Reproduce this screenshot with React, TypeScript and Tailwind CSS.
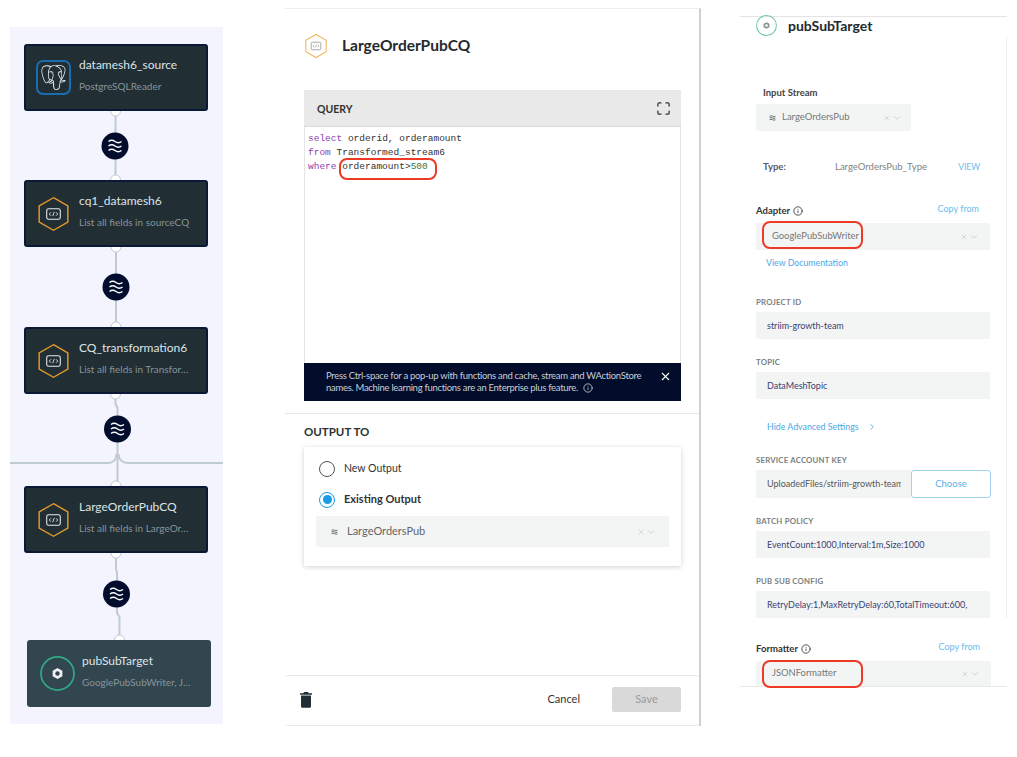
import React from 'react'
import { Maximize, X, ChevronDown, ChevronRight, Info } from 'lucide-react'
import { SiPostgresql } from 'react-icons/si'

const CodeHex = ({ size = 'w-[31px] h-[36px]', stroke = '#e3982b', ink = '#e6ebed' }: { size?: string; stroke?: string; ink?: string }) => (
  <svg viewBox="0 0 32 36" className={size} fill="none">
    <path d="M16 1.2 30.8 9.6v16.8L16 34.8 1.2 26.4V9.6Z" stroke={stroke} strokeWidth="1.5" />
    <rect x="9" y="12.5" width="14" height="11" rx="2" stroke={ink} strokeWidth="1.1" />
    <path d="M13.4 16.2 11.6 18l1.8 1.8M18.6 16.2l1.8 1.8-1.8 1.8M16.8 15.8l-1.6 4.4" stroke={ink} strokeWidth=".9" />
  </svg>
)

const NutRing = ({ size, ring, nut, hole }: { size: string; ring: string; nut: string; hole: string }) => (
  <svg viewBox="0 0 36 36" className={size} fill="none">
    <circle cx="18" cy="18" r="17" stroke={ring} strokeWidth="1.8" />
    <path d="M18 12.4 23 15.2v5.6L18 23.6 13 20.8v-5.6Z" fill={nut} />
    <circle cx="18" cy="18" r="2.3" fill={hole} />
  </svg>
)

const StreamGlyph = () => (
  <svg viewBox="0 0 12 10" className="w-[7px] h-[8px] shrink-0" fill="none" stroke="#555" strokeWidth="1.4">
    <path d="M1 2q2.5-1.6 5 0t5 0M1 5q2.5-1.6 5 0t5 0M1 8q2.5-1.6 5 0t5 0" />
  </svg>
)

const Node = ({ icon, title, sub, className, iconClass = 'w-[53px] pl-[2px]' }: { icon: React.ReactNode; title: string; sub: string; className: string; iconClass?: string }) => (
  <div className={`relative w-[184px] h-[67px] rounded-[3px] flex items-center ${className}`}>
    <div className={`flex justify-center shrink-0 ${iconClass}`}>{icon}</div>
    <div className="flex flex-col gap-[6px] min-w-0 pb-[6px]">
      <div className="text-[12px] leading-[16px] text-[#dde3e6] whitespace-nowrap">{title}</div>
      <div className="text-[10px] leading-[14px] text-[#87949a] whitespace-nowrap">{sub}</div>
    </div>
  </div>
)

// piece of pipeline between two nodes: wire, stream bubble, end caps
const Wire = ({ h, d, top, bottom, cx, cy, extra }: { h: number; d: string; top: number; bottom: number; cx: number; cy: number; extra?: string }) => (
  <svg width="213" height={h} className="overflow-visible" fill="none">
    <circle cx={top} cy="0" r="5" fill="#fff" stroke="#bfcbd1" />
    <circle cx={bottom} cy={h} r="5" fill="#fff" stroke="#bfcbd1" />
    <path d={d} stroke="#bfcbd1" strokeWidth="2" />
    {extra && <path d={extra} stroke="#bfcbd1" strokeWidth="2" />}
    <circle cx={cx} cy={cy} r="13.5" fill="#020d2e" />
    <path
      d={`M${cx - 6.5} ${cy - 4.5}q3.2-2.6 6.5 0t6.5 0M${cx - 6.5} ${cy}q3.2-2.6 6.5 0t6.5 0M${cx - 6.5} ${cy + 4.5}q3.2-2.6 6.5 0t6.5 0`}
      stroke="#fff"
      strokeWidth="1.4"
    />
  </svg>
)

const darkNode = 'bg-[#212e34] border-2 border-[#0b1836] ml-[14px]'

const Pipeline = () => (
  <div className="w-[213px] h-[697px] mt-[27px] bg-[#f3f4fe] pt-[17px] shrink-0">
    <Node
      className={darkNode}
      title="datamesh6_source"
      sub="PostgreSQLReader"
      icon={
        <div className="w-[35px] h-[35px] rounded-[7px] border-2 border-[#1c6cb0] flex items-center justify-center">
          <SiPostgresql className="w-[25px] h-[25px] text-[#eceff0]" />
        </div>
      }
    />
    <Wire h={69} d="M105.5 5V64" top={105.5} bottom={105.5} cx={105} cy={35} />
    <Node className={darkNode} title="cq1_datamesh6" sub="List all fields in sourceCQ" icon={<CodeHex />} />
    <Wire h={80} d="M106 5V75" top={106} bottom={106} cx={106} cy={40} />
    <Node className={darkNode} title="CQ_transformation6" sub="List all fields in Transfor…" icon={<CodeHex />} />
    <Wire
      h={92}
      d="M105.5 5V10L107.5 14V87"
      top={105.5}
      bottom={106}
      cx={107.5}
      cy={35}
      extra="M0 69H98Q106 69 106.5 60M213 69H118Q109 69 108.5 60"
    />
    <Node className={darkNode} title="LargeOrderPubCQ" sub="List all fields in LargeOr…" icon={<CodeHex />} />
    <Wire h={87} d="M106 5V16L107 20V60L109.5 64V82" top={106} bottom={109.5} cx={106.5} cy={41} />
    <Node
      className="bg-[#324650] ml-[17px]"
      iconClass="w-[55px] pl-[6px]"
      title="pubSubTarget"
      sub="GooglePubSubWriter, J…"
      icon={<NutRing size="w-[35px] h-[35px]" ring="#2fa883" nut="#eef1f2" hole="#324650" />}
    />
  </div>
)

const Radio = ({ checked, label }: { checked?: boolean; label: string }) => (
  <div className="flex items-center gap-[9px] h-[17px]">
    <div className={`w-[16px] h-[16px] rounded-full border-[1.5px] flex items-center justify-center ${checked ? 'border-[#1a9be8]' : 'border-[#555]'}`}>
      {checked && <div className="w-[9px] h-[9px] rounded-full bg-[#1a9be8]" />}
    </div>
    <span className={checked ? 'text-[11px] font-bold text-[#333]' : 'text-[10.5px] text-[#333]'}>{label}</span>
  </div>
)

const TrashIcon = () => (
  <svg viewBox="0 0 12 16" className="w-[12px] h-[16px]" fill="#212e34">
    <path d="M4 0h4l.6 1.2H12v1.6H0V1.2h3.4Z" />
    <path d="M1 3.6h10V14.4a1.4 1.4 0 0 1-1.4 1.4H2.4A1.4 1.4 0 0 1 1 14.4Z" />
  </svg>
)

const SelectMarks = () => (
  <span className="flex items-center gap-[1px] text-[#c4c8ca]">
    <X className="w-[8px] h-[8px]" strokeWidth={2} />
    <ChevronDown className="w-[10px] h-[10px]" strokeWidth={2} />
  </span>
)

const QueryPanel = () => (
  <div className="w-[416px] h-[718px] mt-[8px] ml-[62px] shrink-0 flex flex-col border-t border-[#ececec] border-r-2 border-r-[#cfd0d6]">
    <div className="h-[73px] pl-[20px] flex items-center gap-[15px]">
      <CodeHex size="w-[22px] h-[26px]" stroke="#f2b45a" ink="#8a8a8a" />
      <div className="text-[15.5px] font-bold text-[#23292c]">LargeOrderPubCQ</div>
    </div>

    <div className="relative ml-[19px] w-[377px] mt-[8px]">
      <div className="h-[37px] bg-[#e9e9e9] border-b border-[#d9d9d9] flex items-center justify-between pl-[13px] pr-[10px]">
        <span className="text-[10.5px] font-bold text-[#333] pt-[3px]">QUERY</span>
        <Maximize className="w-[15px] h-[15px] text-[#333]" strokeWidth={2} />
      </div>
      <div className="h-[236px] border-x border-[#e4e4e4] pt-[5px] pl-[3px] font-['Liberation_Mono',monospace] text-[9.5px] leading-[14px] text-[#333] whitespace-pre">
        <div><span className="text-[#8e44ad]">select</span> orderid, orderamount</div>
        <div><span className="text-[#8e44ad]">from</span> Transformed_stream6</div>
        <div><span className="text-[#8e44ad]">where</span> orderamount&gt;<span className="text-[#1f7a55]">500</span></div>
      </div>
      <div className="h-[38px] bg-[#020d2b] flex items-center pl-[22px] relative">
        <div className="text-[9.5px] tracking-[-0.3px] leading-[12px] text-[#c9cdd6] whitespace-nowrap">
          Press Ctrl-space for a pop-up with functions and cache, stream and WActionStore
          <br />
          names. Machine learning functions are an Enterprise plus feature.
          <Info className="inline w-[10px] h-[10px] ml-[5px] -mt-[2px]" />
        </div>
        <X className="absolute right-[9px] top-[7px] w-[13px] h-[13px] text-white" strokeWidth={2} />
      </div>
      <div className="absolute left-[35px] top-[68px] w-[98px] h-[22px] rounded-[8px] border-2 border-[#ec3a27]" />
    </div>

    <div className="mt-[12px] border-t border-[#e6e6e6] pl-[19px] pt-[10px]">
      <div className="text-[11.5px] leading-[16px] font-bold text-[#2d3235]">OUTPUT TO</div>
      <div className="mt-[7px] w-[377px] h-[119px] shadow-[0_1px_5px_rgba(0,0,0,0.18)] pt-[13px] px-[12px]">
        <div className="pl-[3px] flex flex-col gap-[14px]">
          <Radio label="New Output" />
          <Radio checked label="Existing Output" />
        </div>
        <div className="mt-[8px] h-[31px] bg-[#f3f5f5] flex items-center pl-[15px] pr-[13px] gap-[9px]">
          <StreamGlyph />
          <span className="text-[11px] text-[#666] flex-1">LargeOrdersPub</span>
          <SelectMarks />
        </div>
      </div>
    </div>

    <div className="mt-auto h-[51px] border-t border-b border-[#e9e9e9] flex items-center pl-[15px] pr-[18px] pb-[2px] rounded-[3px]">
      <TrashIcon />
      <span className="ml-auto text-[11px] text-[#333]">Cancel</span>
      <div className="ml-[32px] w-[69px] h-[25px] rounded-[2px] bg-[#d9d9d9] flex items-center justify-center text-[11px] text-[#9a9a9a]">Save</div>
    </div>
  </div>
)

const FieldLabel = ({ children }: { children: string }) => (
  <div className="h-[12px] mb-[4px] mt-[17px] text-[7.8px] leading-[12px] font-bold tracking-[0.2px] text-[#7a7f83]">{children}</div>
)

const Field = ({ children }: { children: string }) => (
  <div className="h-[27px] bg-[#f3f5f5] flex items-center pl-[11px] text-[9px] text-[#3b3f72] whitespace-nowrap">{children}</div>
)

const SectionRow = ({ title }: { title: string }) => (
  <div className="h-[14px] mb-[5px] flex items-center justify-between pr-[11px]">
    <span className="flex items-center gap-[3px] text-[9.5px] font-bold text-[#333]">
      {title}
      <Info className="w-[10px] h-[10px]" />
    </span>
    <span className="text-[9px] text-[#6dbcec] -mt-[4px]">Copy from</span>
  </div>
)

const TargetPanel = () => (
  <div className="w-[267px] h-[671px] mt-[16px] ml-[39px] shrink-0 border-t border-[#e4e4e4] relative">
    <div className="h-[20px] pl-[16px] pb-[3px] flex items-center gap-[11px]">
      <NutRing size="w-[21px] h-[21px]" ring="#6fc9ab" nut="#8a9297" hole="#fff" />
      <span className="text-[14px] font-bold text-[#23292c]">pubSubTarget</span>
    </div>

    <div className="h-[581px] border-r border-[#eeeeee] pl-[16px] pr-[16px] pt-[50px]">
      <div className="pl-[7px] h-[12px] mb-[5px] text-[9.5px] leading-[12px] font-bold text-[#444]">Input Stream</div>
      <div className="w-[155px] h-[27px] bg-[#f3f5f5] flex items-center pl-[13px] pr-[9px] gap-[6px] text-[9.5px] text-[#777]">
        <StreamGlyph />
        <span className="flex-1">LargeOrdersPub</span>
        <SelectMarks />
      </div>

      <div className="mt-[29px] h-[14px] pl-[7px] flex items-center text-[9.5px] pr-[10px]">
        <span className="w-[72px] font-bold text-[#555a70]">Type:</span>
        <span className="flex-1 text-[#808488]">LargeOrdersPub_Type</span>
        <span className="text-[8.5px] text-[#6dbcec]">VIEW</span>
      </div>

      <div className="mt-[30px]">
        <SectionRow title="Adapter" />
        <div className="h-[27px] bg-[#f3f5f5] flex items-center pl-[16px] pr-[11px] justify-between text-[9.4px] text-[#777]">
          GooglePubSubWriter
          <SelectMarks />
        </div>
      </div>
      <div className="mt-[7px] h-[12px] pl-[10px] text-[8.8px] leading-[12px] text-[#4aa8e6]">View Documentation</div>

      <div className="mt-[27px]">
        <FieldLabel>PROJECT ID</FieldLabel>
        <Field>striim-growth-team</Field>
        <FieldLabel>TOPIC</FieldLabel>
        <Field>DataMeshTopic</Field>
      </div>

      <div className="mt-[21px] h-[14px] pl-[11px] flex items-center gap-[8px] text-[8.8px] text-[#4aa8e6]">
        Hide Advanced Settings
        <ChevronRight className="w-[10px] h-[10px]" />
      </div>

      <div className="mt-[20px]">
        <FieldLabel>SERVICE ACCOUNT KEY</FieldLabel>
        <div className="h-[28px] flex">
          <div className="w-[155px] shrink-0 bg-[#f3f5f5] flex items-center pl-[11px] text-[9px] text-[#555]">
            <span className="w-[134px] overflow-hidden whitespace-nowrap">UploadedFiles/striim-growth-team</span>
          </div>
          <div className="w-[80px] shrink-0 border-[1.5px] border-[#9fd3f2] rounded-[3px] flex items-center justify-center text-[9.5px] text-[#5ab3e8]">Choose</div>
        </div>
        <FieldLabel>BATCH POLICY</FieldLabel>
        <Field>EventCount:1000,Interval:1m,Size:1000</Field>
        <FieldLabel>PUB SUB CONFIG</FieldLabel>
        <Field>RetryDelay:1,MaxRetryDelay:60,TotalTimeout:600,</Field>
      </div>
    </div>

    <div className="pl-[16px] pr-[16px] pt-[24px]">
      <SectionRow title="Formatter" />
      <div className="h-[25px] bg-[#f3f5f5] flex items-center pl-[16px] pr-[11px] justify-between text-[9.4px] text-[#777]">
        JSONFormatter
        <SelectMarks />
      </div>
    </div>
    <div className="border-t border-[#e9e9e9]" />

    {/* red callouts drawn over the shot */}
    <div className="absolute left-[22px] top-[204px] w-[101px] h-[28px] rounded-[8px] border-2 border-[#ec3a27]" />
    <div className="absolute left-[22px] top-[643px] w-[101px] h-[28px] rounded-[8px] border-2 border-[#ec3a27]" />
  </div>
)

const App: React.FC = () => (
  <div className="w-[1017px] h-[757px] bg-white flex items-start pl-[10px] overflow-hidden font-['Lato',sans-serif]">
    <Pipeline />
    <QueryPanel />
    <TargetPanel />
  </div>
)

export default App
